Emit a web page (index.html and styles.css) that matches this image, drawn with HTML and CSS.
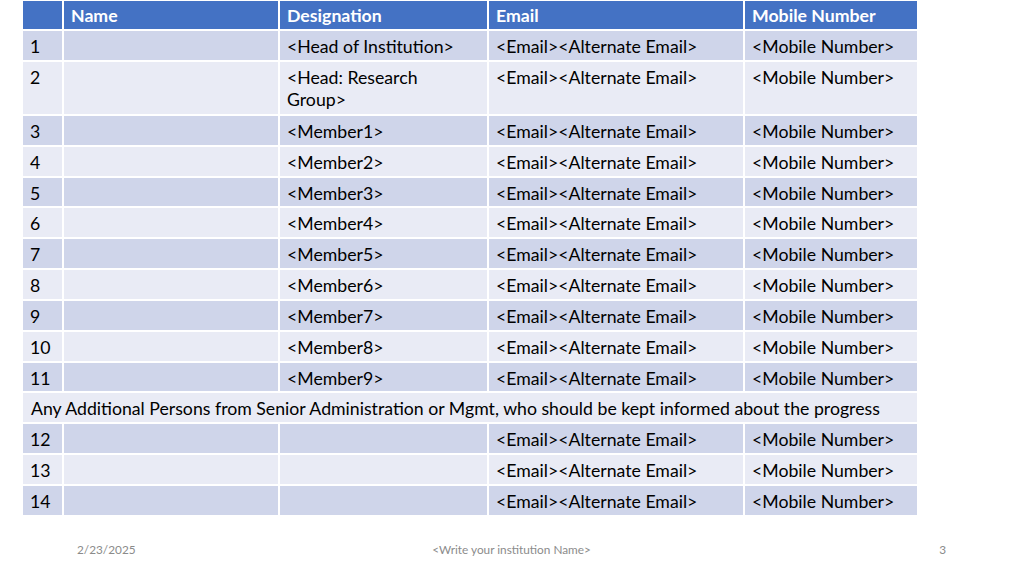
FILE: index.html
```html
<!DOCTYPE html>
<html>
<head>
<meta charset="utf-8">
<link rel="stylesheet" href="styles.css">
</head>
<body>
<div class="slide">
  <table class="contacts">
    <colgroup>
      <col class="c-no"><col class="c-name"><col class="c-desig"><col class="c-email"><col class="c-mobile">
    </colgroup>
    <thead>
      <tr><th></th><th>Name</th><th>Designation</th><th>Email</th><th>Mobile Number</th></tr>
    </thead>
    <tbody>
      <tr class="odd"><td>1</td><td></td><td>&lt;Head of Institution&gt;</td><td>&lt;Email&gt;&lt;Alternate Email&gt;</td><td>&lt;Mobile Number&gt;</td></tr>
      <tr class="even tall"><td>2</td><td></td><td>&lt;Head: Research<br>Group&gt;</td><td>&lt;Email&gt;&lt;Alternate Email&gt;</td><td>&lt;Mobile Number&gt;</td></tr>
      <tr class="odd"><td>3</td><td></td><td>&lt;Member1&gt;</td><td>&lt;Email&gt;&lt;Alternate Email&gt;</td><td>&lt;Mobile Number&gt;</td></tr>
      <tr class="even"><td>4</td><td></td><td>&lt;Member2&gt;</td><td>&lt;Email&gt;&lt;Alternate Email&gt;</td><td>&lt;Mobile Number&gt;</td></tr>
      <tr class="odd"><td>5</td><td></td><td>&lt;Member3&gt;</td><td>&lt;Email&gt;&lt;Alternate Email&gt;</td><td>&lt;Mobile Number&gt;</td></tr>
      <tr class="even"><td>6</td><td></td><td>&lt;Member4&gt;</td><td>&lt;Email&gt;&lt;Alternate Email&gt;</td><td>&lt;Mobile Number&gt;</td></tr>
      <tr class="odd"><td>7</td><td></td><td>&lt;Member5&gt;</td><td>&lt;Email&gt;&lt;Alternate Email&gt;</td><td>&lt;Mobile Number&gt;</td></tr>
      <tr class="even"><td>8</td><td></td><td>&lt;Member6&gt;</td><td>&lt;Email&gt;&lt;Alternate Email&gt;</td><td>&lt;Mobile Number&gt;</td></tr>
      <tr class="odd"><td>9</td><td></td><td>&lt;Member7&gt;</td><td>&lt;Email&gt;&lt;Alternate Email&gt;</td><td>&lt;Mobile Number&gt;</td></tr>
      <tr class="even"><td>10</td><td></td><td>&lt;Member8&gt;</td><td>&lt;Email&gt;&lt;Alternate Email&gt;</td><td>&lt;Mobile Number&gt;</td></tr>
      <tr class="odd"><td>11</td><td></td><td>&lt;Member9&gt;</td><td>&lt;Email&gt;&lt;Alternate Email&gt;</td><td>&lt;Mobile Number&gt;</td></tr>
      <tr class="even"><td colspan="5" class="span">Any Additional Persons from Senior Administration or Mgmt, who should be kept informed about the progress</td></tr>
      <tr class="odd"><td>12</td><td></td><td></td><td>&lt;Email&gt;&lt;Alternate Email&gt;</td><td>&lt;Mobile Number&gt;</td></tr>
      <tr class="even"><td>13</td><td></td><td></td><td>&lt;Email&gt;&lt;Alternate Email&gt;</td><td>&lt;Mobile Number&gt;</td></tr>
      <tr class="odd"><td>14</td><td></td><td></td><td>&lt;Email&gt;&lt;Alternate Email&gt;</td><td>&lt;Mobile Number&gt;</td></tr>
    </tbody>
  </table>
  <footer class="footer">
    <span class="f-date">2/23/2025</span>
    <span class="f-title">&lt;Write your institution Name&gt;</span>
    <span class="f-page">3</span>
  </footer>
</div>
</body>
</html>
```
FILE: styles.css
```css
html, body {
  margin: 0;
  padding: 0;
  background: #ffffff;
}
.slide {
  width: 1024px;
  height: 576px;
  display: flex;
  flex-direction: column;
  overflow: hidden;
  font-family: Lato, "Open Sans", sans-serif;
}
.contacts {
  margin: 1px 0 0 23px;
  border-collapse: separate;
  border-spacing: 0;
  table-layout: fixed;
  width: 894px;
  font-size: 17.7px;
  color: #000;
}
.c-no { width: 41px; }
.c-name { width: 216px; }
.c-desig { width: 209px; }
.c-email { width: 256px; }
.c-mobile { width: 172px; }
.contacts th,
.contacts td {
  box-sizing: border-box;
  border-right: 2px solid #fff;
  border-bottom: 2px solid #fff;
  padding: 5px 6px 0 7px;
  text-align: left;
  vertical-align: top;
  line-height: 22px;
  height: 30.85px;
  white-space: normal;
}
.contacts th:last-child,
.contacts td:last-child { border-right: 0; }
.contacts td.span { padding-left: 8px; }
.contacts th {
  background: #4472c4;
  color: #fff;
  font-weight: bold;
  height: 30px;
  padding-top: 4px;
}
.odd td { background: #cfd5ea; }
.even td { background: #e9ebf5; }
.tall td { height: 54px; }
.footer {
  display: grid;
  grid-template-columns: 77px 1fr 240px 1fr 78px;
  align-items: center;
  margin-top: 24px;
  height: 18px;
  font-size: 11.8px;
  color: #8b8b8b;
}
.f-date { grid-column: 2; }
.f-title { grid-column: 3; text-align: center; }
.f-page { grid-column: 4; text-align: right; }
```
